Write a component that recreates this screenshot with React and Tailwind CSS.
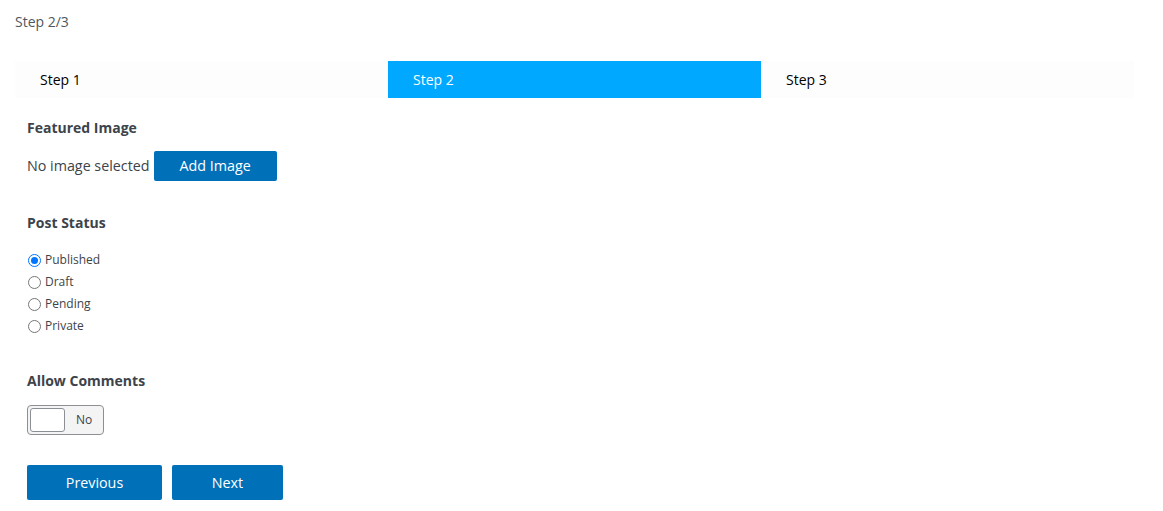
import React, { useState } from "react";

const font = { fontFamily: "'Open Sans', 'Noto Sans', sans-serif" };

const steps = ["Step 1", "Step 2", "Step 3"];

const Radio = ({ label, checked, onChange }) => (
  <label className="flex items-center h-[22px] cursor-pointer" onClick={onChange}>
    <span
      className={
        "w-[13px] h-[13px] rounded-full border flex items-center justify-center mr-[4px] ml-[1px] " +
        (checked ? "border-[#0075ff]" : "border-[#767676]")
      }
    >
      {checked && <span className="w-[7px] h-[7px] rounded-full bg-[#0075ff]" />}
    </span>
    <span className="text-[12px] text-[#3c434a]">{label}</span>
  </label>
);

export default function App() {
  const [status, setStatus] = useState("Published");

  return (
    <div className="bg-white min-h-screen w-[1163px] h-[511px] overflow-hidden" style={font}>
      {/* ---------- STEP COUNTER ---------- */}
      <div className="pl-[15px] pt-[12px] text-[14px] text-[#50575e] leading-[20px]">Step 2/3</div>

      {/* ---------- STEP BAR ---------- */}
      <div className="ml-[15px] mt-[29px] w-[1119px] h-[37px] bg-[#fdfdfd] flex">
        {steps.map((s, i) => (
          <div
            key={s}
            className={
              "flex-1 flex items-center pl-[25px] text-[14px] " +
              (i === 1 ? "bg-[#00a8ff] text-white" : "text-black")
            }
          >
            {s}
          </div>
        ))}
      </div>

      {/* ---------- FORM ---------- */}
      <div className="pl-[27px] pt-[20px]">
        <div className="text-[14px] font-bold text-[#3c434a] leading-[20px]">Featured Image</div>
        <div className="flex items-center mt-[13px] h-[30px]">
          <span className="text-[14.3px] text-[#3c434a] mr-[4px]">No image selected</span>
          <button className="w-[123px] h-[30px] bg-[#0070b8] text-white text-[14.3px] rounded-[2px]">
            Add Image
          </button>
        </div>

        <div className="mt-[32px] text-[14px] font-bold text-[#3c434a] leading-[20px]">Post Status</div>
        <div className="mt-[16px] flex flex-col">
          {["Published", "Draft", "Pending", "Private"].map((o) => (
            <Radio key={o} label={o} checked={status === o} onChange={() => setStatus(o)} />
          ))}
        </div>

        <div className="mt-[34px] text-[14px] font-bold text-[#3c434a] leading-[20px]">Allow Comments</div>
        <div className="mt-[14px] w-[77px] h-[30px] border border-[#8c8f94] rounded-[4px] bg-[#f4f4f4] flex items-center px-[2px]">
          <div className="w-[35px] h-[24px] bg-white border border-[#8c8f94] rounded-[3px]" />
          <span className="ml-[11px] text-[12px] text-[#3c434a]">No</span>
        </div>

        <div className="mt-[30px] flex gap-[10px]">
          <button className="w-[135px] h-[35px] bg-[#0070b8] text-white text-[14.3px] rounded-[2px]">
            Previous
          </button>
          <button className="w-[111px] h-[35px] bg-[#0070b8] text-white text-[14.3px] rounded-[2px]">
            Next
          </button>
        </div>
      </div>
    </div>
  );
}
